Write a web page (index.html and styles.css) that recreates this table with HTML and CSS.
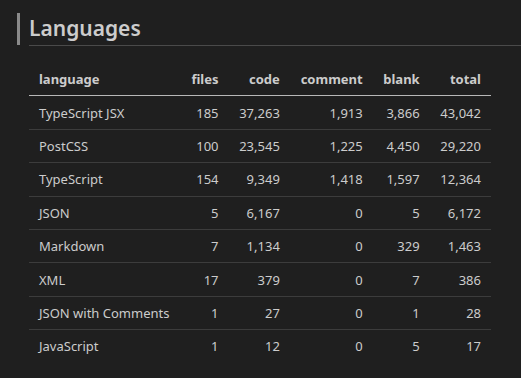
FILE: index.html
```html
<!DOCTYPE html>
<html>
<head>
    <title>Languages</title>
    <link rel="stylesheet" href="styles.css">
</head>
<body>
    <div class="preview">
        <div class="section-head">
            <div class="bar"></div>
            <h2>Languages</h2>
        </div>

        <table class="lang-table">
            <thead>
                <tr>
                    <th class="name">language</th>
                    <th>files</th>
                    <th>code</th>
                    <th>comment</th>
                    <th>blank</th>
                    <th>total</th>
                </tr>
            </thead>
            <tbody>
                <tr><td class="name">TypeScript JSX</td><td>185</td><td>37,263</td><td>1,913</td><td>3,866</td><td>43,042</td></tr>
                <tr><td class="name">PostCSS</td><td>100</td><td>23,545</td><td>1,225</td><td>4,450</td><td>29,220</td></tr>
                <tr><td class="name">TypeScript</td><td>154</td><td>9,349</td><td>1,418</td><td>1,597</td><td>12,364</td></tr>
                <tr><td class="name">JSON</td><td>5</td><td>6,167</td><td>0</td><td>5</td><td>6,172</td></tr>
                <tr><td class="name">Markdown</td><td>7</td><td>1,134</td><td>0</td><td>329</td><td>1,463</td></tr>
                <tr><td class="name">XML</td><td>17</td><td>379</td><td>0</td><td>7</td><td>386</td></tr>
                <tr><td class="name">JSON with Comments</td><td>1</td><td>27</td><td>0</td><td>1</td><td>28</td></tr>
                <tr><td class="name">JavaScript</td><td>1</td><td>12</td><td>0</td><td>5</td><td>17</td></tr>
            </tbody>
        </table>
    </div>
</body>
</html>
```

FILE: styles.css
```css
body {
    background-color: #1f1f1f;
    color: #cccccc;
    font-family: 'Noto Sans', 'Open Sans', sans-serif;
    margin: 0;
    padding: 0;
    overflow: hidden;
}

.preview {
    padding: 13px 0 0 17px;
}

.section-head {
    display: flex;
    gap: 9px;
}

.bar {
    width: 3px;
    height: 32px;
    background-color: #8a8a8a;
}

h2 {
    flex: 1;
    margin: 0;
    font-size: 21px;
    font-weight: 600;
    line-height: 30px;
    color: #cccccc;
    padding-bottom: 2px;
    border-bottom: 1px solid #4a4a4a;
}

.lang-table {
    margin: 17px 0 0 12px;
    width: 462px;
    border-collapse: collapse;
    font-size: 13px;
}

.lang-table th,
.lang-table td {
    text-align: right;
    padding: 0 10px;
    height: 32.4px;
    white-space: nowrap;
}

.lang-table th {
    font-weight: 700;
    border-bottom: 1px solid #b8b8b8;
}

.lang-table td {
    border-bottom: 1px solid #3c3c3c;
}

.lang-table tbody tr:last-child td {
    border-bottom: none;
}

.lang-table .name {
    text-align: left;
}
```
